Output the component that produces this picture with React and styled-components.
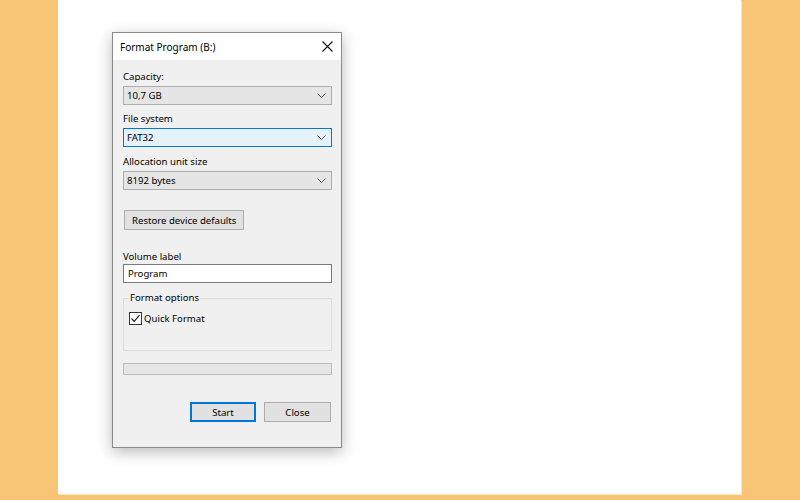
import React from 'react'
import styled, { createGlobalStyle } from 'styled-components'

const GlobalStyle = createGlobalStyle`
  html, body {
    margin: 0;
    padding: 0;
    background: #f8c576;
  }
  body {
    font-family: "Noto Sans", "Liberation Sans", sans-serif;
    font-size: 9.6px;
    color: #000;
  }
`

const Page = styled.div`
  width: 800px;
  height: 500px;
  background: #f8c576;
  overflow: hidden;
`

const Sheet = styled.div`
  margin-left: 58px;
  width: 683px;
  height: 494px;
  background: #fff;
  box-shadow: 1px 1px 0 #fbe3bd;
  padding: 32px 0 0 54px;
  box-sizing: border-box;
`

const Dialog = styled.div`
  width: 230px;
  height: 416px;
  box-sizing: border-box;
  border: 1px solid #8a8a8a;
  background: #f0f0f0;
  box-shadow: 0 4px 14px rgba(0, 0, 0, 0.28);
  display: flex;
  flex-direction: column;
`

const TitleBar = styled.div`
  height: 27px;
  background: #fff;
  display: flex;
  align-items: center;
  justify-content: space-between;
  padding: 0 8px 0 7px;
  font-size: 10px;
`

const Body = styled.div`
  padding: 9px 9px 0 10px;
  display: flex;
  flex-direction: column;
`

const Label = styled.div`
  height: 15px;
  line-height: 15px;
  margin-top: ${p => p.$gap || 0}px;
  margin-bottom: ${p => (p.$tight ? 0 : 2)}px;
`

const Combo = styled.div`
  height: 19px;
  box-sizing: border-box;
  display: flex;
  align-items: center;
  justify-content: space-between;
  padding: 0 5px 0 3px;
  border: 1px solid ${p => (p.$focused ? '#0078d7' : '#adadad')};
  background: ${p => (p.$focused ? '#e5f1fb' : '#e5e5e5')};
`

const Button = styled.div`
  height: 20px;
  box-sizing: border-box;
  display: flex;
  align-items: center;
  justify-content: center;
  padding: 0 7px;
  border: 1px solid ${p => (p.$primary ? '#0078d7' : '#adadad')};
  box-shadow: ${p => (p.$primary ? 'inset 0 0 0 1px #0078d7' : 'none')};
  background: #e1e1e1;
  width: ${p => p.$width || 'auto'};
`

const RestoreRow = styled.div`
  display: flex;
  margin: 20px 0 0 1px;
`

const TextInput = styled.div`
  height: 19px;
  box-sizing: border-box;
  border: 1px solid #7a7a7a;
  background: #fff;
  display: flex;
  align-items: center;
  padding: 0 4px;
`

const GroupBox = styled.fieldset`
  margin: 8px 0 0;
  padding: 6px 5px 0;
  height: 60px;
  box-sizing: border-box;
  border: 1px solid #dcdcdc;
  min-width: 0;
`

const Legend = styled.legend`
  padding: 0 1px;
  margin-left: 0;
  line-height: 14px;
`

const CheckRow = styled.label`
  display: flex;
  align-items: center;
  gap: 2px;
  height: 15px;
`

const Box = styled.span`
  width: 13px;
  height: 13px;
  box-sizing: border-box;
  border: 1px solid #333;
  background: #fff;
  display: flex;
  align-items: center;
  justify-content: center;
`

const Progress = styled.div`
  margin-top: 12px;
  height: 12px;
  box-sizing: border-box;
  border: 1px solid #bcbcbc;
  background: #e6e6e6;
`

const Footer = styled.div`
  display: flex;
  justify-content: flex-end;
  gap: 8px;
  margin: 27px 1px 0 0;
`

const Chevron = () => (
  <svg width="9" height="5" viewBox="0 0 9 5">
    <polyline points="0.5,0.5 4.5,4.5 8.5,0.5" fill="none" stroke="#555" strokeWidth="1" />
  </svg>
)

const CloseIcon = () => (
  <svg width="11" height="11" viewBox="0 0 11 11">
    <path d="M0.5 0.5 L10.5 10.5 M10.5 0.5 L0.5 10.5" stroke="#111" strokeWidth="1.1" />
  </svg>
)

const Tick = () => (
  <svg width="11" height="11" viewBox="0 0 11 11">
    <polyline points="1.5,5.5 4.2,8.3 9.5,2.2" fill="none" stroke="#222" strokeWidth="1.2" />
  </svg>
)

const Select = ({ value, focused }) => (
  <Combo $focused={focused}>
    <span>{value}</span>
    <Chevron />
  </Combo>
)

export default function App() {
  return (
    <Page>
      <GlobalStyle />
      <Sheet>
        <Dialog>
          <TitleBar>
            <span>Format Program (B:)</span>
            <CloseIcon />
          </TitleBar>
          <Body>
            <Label>Capacity:</Label>
            <Select value="10,7 GB" />
            <Label $gap={6}>File system</Label>
            <Select value="FAT32" focused />
            <Label $gap={7}>Allocation unit size</Label>
            <Select value="8192 bytes" />
            <RestoreRow>
              <Button>Restore device defaults</Button>
            </RestoreRow>
            <Label $gap={19} $tight>Volume label</Label>
            <TextInput>Program</TextInput>
            <GroupBox>
              <Legend>Format options</Legend>
              <CheckRow>
                <Box><Tick /></Box>
                <span>Quick Format</span>
              </CheckRow>
            </GroupBox>
            <Progress />
            <Footer>
              <Button $primary $width="66px">Start</Button>
              <Button $width="67px">Close</Button>
            </Footer>
          </Body>
        </Dialog>
      </Sheet>
    </Page>
  )
}
